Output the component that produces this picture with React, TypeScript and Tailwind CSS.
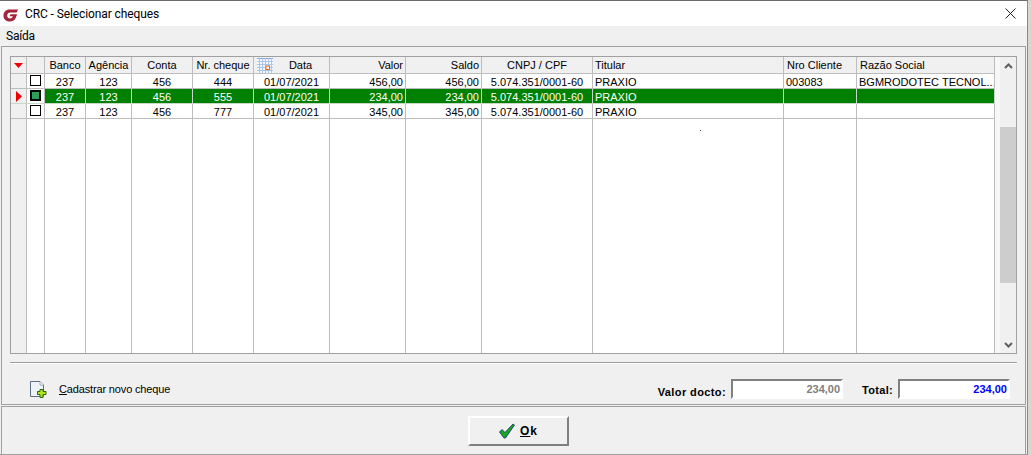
const cols = "grid grid-cols-[16px_18px_41px_46px_61px_61px_76px_76px_76px_111px_191px_73px_138px]";

const rows = [
  { nr: "444", valor: "456,00", saldo: "456,00", cliente: "003083", razao: "BGMRODOTEC TECNOL..." },
  { nr: "555", valor: "234,00", saldo: "234,00", cliente: "", razao: "", selected: true },
  { nr: "777", valor: "345,00", saldo: "345,00", cliente: "", razao: "" },
];

const Logo = () => (
  <svg className="mt-[3px]" width="16" height="13" viewBox="0 0 17 15" preserveAspectRatio="none">
    <path d="M16 0.5 H7 C3 0.5 0.5 3.5 0.5 7.5 C0.5 11.5 3 14.5 7 14.5 C10.5 14.5 12.5 13 13.5 10.5 L15 6 H8 L7 8.5 H10.5 C10 10.3 9 11 7.5 11 C5.5 11 4.5 9.5 4.5 7.5 C4.5 5.5 5.8 4 8 4 H14.5 Z" fill="#a3243b" />
  </svg>
);

const CalendarIcon = () => (
  <svg width="16" height="15" viewBox="0 0 16 15">
    <rect x="0" y="0" width="16" height="15" fill="#f4f7fc" />
    <path d="M0 0.5H16" stroke="#7fa6dc" />
    <path d="M0 3.5H16M0 6.5H16M0 9.5H16M0 12.5H16M2.5 0V15M5.5 0V15M8.5 0V15M11.5 0V15M14.5 0V15" stroke="#a8c6ec" />
    <rect x="9" y="8" width="3.5" height="3.5" fill="#fff" stroke="#e8651a" />
  </svg>
);

const NewFileIcon = () => (
  <svg width="17" height="17" viewBox="0 0 17 17">
    <path d="M0.5 0.5 H10 L13.5 4 V15.5 H0.5 Z" fill="#eef3fa" stroke="#5f6f85" />
    <path d="M10 0.5 V4 H13.5" fill="#fff" stroke="#9aa7b8" />
    <path d="M10 8.5 H13 V10.5 H16 V13.5 H13 V16.5 H10 V13.5 H7.5 V10.5 H10 Z" fill="#b5e61d" stroke="#2b6a0a" />
  </svg>
);

const CheckIcon = () => (
  <svg width="16" height="16" viewBox="0 0 16 16">
    <path d="M0.5 9 L3 6.5 L6 9.5 L14 1 L15.5 2 L6.5 15 L5 15 Z" fill="#19a81c" stroke="#0a2a7a" strokeWidth="0.8" />
  </svg>
);

const Chevron = ({ up }: { up?: boolean }) => (
  <svg width="9" height="6" viewBox="0 0 9 6">
    <path d={up ? "M1 5 L4.5 1.5 L8 5" : "M1 1 L4.5 4.5 L8 1"} fill="none" stroke="#606060" strokeWidth="2" />
  </svg>
);

const HeadCell = ({ className = "", children }: { className?: string; children?: React.ReactNode }) => (
  <div className={`flex items-center border-r border-[#bdbdbd] ${className}`}>{children}</div>
);

const Cell = ({ selected, className = "", children }: { selected?: boolean; className?: string; children?: React.ReactNode }) => (
  <div
    data-selected={selected}
    className={`flex items-center pt-[2px] border-r border-[#bdbdbd] whitespace-nowrap overflow-hidden data-[selected=true]:border-[#c8d8c8] ${className}`}
  >
    {children}
  </div>
);

export default function App() {
  return (
    <div className="flex w-[1031px] h-[455px] overflow-hidden bg-[#d9d7c9] text-[11px] text-black font-['Liberation_Sans',sans-serif]">
      <div className="flex flex-col w-[1028px] h-full bg-[#f0f0f0] border-t border-r border-b border-t-[#6b6b6b] border-r-[#8a8a8a] border-b-[#a0a0a0]">
        {/* title bar */}
        <div className="flex items-center h-[25px] shrink-0 bg-white pl-[3px] pr-[11px]">
          <Logo />
          <span className="ml-[6px] text-[12px] tracking-[-0.1px] font-['Roboto',sans-serif]">CRC - Selecionar cheques</span>
          <svg className="ml-auto" width="11" height="11" viewBox="0 0 11 11">
            <path d="M0.5 0.5 L10.5 10.5 M10.5 0.5 L0.5 10.5" stroke="#222" strokeWidth="1" />
          </svg>
        </div>
        {/* menu */}
        <div className="flex items-center h-5 shrink-0 pl-[6px] text-[12px] tracking-[-0.2px] font-['Roboto',sans-serif]">Saída</div>

        {/* main panel */}
        <div className="flex flex-col h-[359px] shrink-0 ml-px mr-px border border-[#a0a0a0] pl-2 pr-2 pt-[9px]">
          {/* grid */}
          <div className="flex h-[298px] shrink-0 bg-white border border-[#a0a0a0]">
            <div className="flex flex-col w-[984px] shrink-0">
              <div className={`${cols} h-[17px] shrink-0 bg-[#f0f0f0] border-b border-[#bdbdbd]`}>
                <HeadCell className="justify-center">
                  <svg width="9" height="5" viewBox="0 0 9 5"><path d="M0 0 H9 L4.5 5 Z" fill="#ee0000" /></svg>
                </HeadCell>
                <HeadCell />
                <HeadCell className="justify-center">Banco</HeadCell>
                <HeadCell className="justify-center">Agência</HeadCell>
                <HeadCell className="justify-center">Conta</HeadCell>
                <HeadCell className="justify-center">Nr. cheque</HeadCell>
                <HeadCell className="relative justify-center pl-[18px]">
                  <span className="absolute left-[3px] top-px"><CalendarIcon /></span>
                  Data
                </HeadCell>
                <HeadCell className="justify-end pr-[2px]">Valor</HeadCell>
                <HeadCell className="justify-end pr-[2px]">Saldo</HeadCell>
                <HeadCell className="justify-center">CNPJ / CPF</HeadCell>
                <HeadCell className="pl-[2px]">Titular</HeadCell>
                <HeadCell className="pl-[3px]">Nro Cliente</HeadCell>
                <HeadCell className="pl-[3px]">Razão Social</HeadCell>
              </div>

              {rows.map(row => {
                const selected = row.selected;
                return (
                  <div
                    key={row.nr}
                    data-selected={selected}
                    className={`${cols} h-[15px] shrink-0 bg-white border-b border-[#bdbdbd] data-[selected=true]:bg-[#008000] data-[selected=true]:text-white data-[selected=true]:border-[#c8d8c8]`}
                  >
                    <div className="flex items-center justify-center bg-[#f0f0f0] border-r border-[#bdbdbd]">
                      {selected && (
                        <svg width="6" height="11" viewBox="0 0 6 11"><path d="M0 0 L6 5.5 L0 11 Z" fill="#ee0000" /></svg>
                      )}
                    </div>
                    <div className="relative bg-white border-r border-[#bdbdbd]">
                      <span
                        data-selected={selected}
                        className="absolute left-[3px] top-[1px] size-[11px] bg-white border border-black data-[selected=true]:bg-[#2ca05a] data-[selected=true]:border-2"
                      ></span>
                    </div>
                    <Cell selected={selected} className="justify-center">237</Cell>
                    <Cell selected={selected} className="justify-center">123</Cell>
                    <Cell selected={selected} className="justify-center">456</Cell>
                    <Cell selected={selected} className="justify-center">{row.nr}</Cell>
                    <Cell selected={selected} className="justify-center">01/07/2021</Cell>
                    <Cell selected={selected} className="justify-end pr-[2px]">{row.valor}</Cell>
                    <Cell selected={selected} className="justify-end pr-[2px]">{row.saldo}</Cell>
                    <Cell selected={selected} className="justify-center">5.074.351/0001-60</Cell>
                    <Cell selected={selected} className="pl-[2px]">PRAXIO</Cell>
                    <Cell selected={selected} className="pl-[2px]">{row.cliente}</Cell>
                    <Cell selected={selected} className="pl-[2px]">{row.razao}</Cell>
                  </div>
                );
              })}

              {/* empty area, column lines keep going */}
              <div className={`${cols} flex-1`}>
                <div className="bg-[#f0f0f0] border-r border-[#bdbdbd]"></div>
                <div className="border-r border-[#bdbdbd]"></div>
                <div className="border-r border-[#bdbdbd]"></div>
                <div className="border-r border-[#bdbdbd]"></div>
                <div className="border-r border-[#bdbdbd]"></div>
                <div className="border-r border-[#bdbdbd]"></div>
                <div className="border-r border-[#bdbdbd]"></div>
                <div className="border-r border-[#bdbdbd]"></div>
                <div className="border-r border-[#bdbdbd]"></div>
                <div className="border-r border-[#bdbdbd]"></div>
                <div className="relative border-r border-[#bdbdbd]">
                  <span className="absolute left-[107px] top-[11px] size-px bg-[#555]"></span>
                </div>
                <div className="border-r border-[#bdbdbd]"></div>
                <div className="border-r border-[#bdbdbd]"></div>
              </div>
            </div>

            {/* scrollbar */}
            <div className="w-[5px] shrink-0 bg-[#f7f7f7]"></div>
            <div className="flex flex-col w-[16px] shrink-0 bg-[#f0f0f0]">
              <div className="flex items-center justify-center h-[17px] shrink-0"><Chevron up /></div>
              <div className="flex-1 pt-[53px] pb-[53px]">
                <div className="h-full bg-[#cdcdcd]"></div>
              </div>
              <div className="flex items-center justify-center h-[17px] shrink-0"><Chevron /></div>
            </div>
          </div>

          {/* divider */}
          <div className="h-[2px] shrink-0 mt-2 bg-[#a0a0a0] border-b border-white"></div>

          {/* totals */}
          <div className="flex flex-1 items-center pl-5 pr-[7px] pt-[10px]">
            <NewFileIcon />
            <span className="ml-[12px] tracking-[-0.15px]"><span className="underline">C</span>adastrar novo cheque</span>
            <span className="ml-auto mt-[7px] font-bold tracking-[0.4px]">Valor docto:</span>
            <div className="flex items-center justify-end ml-[5px] w-[112px] h-[20px] bg-white border-2 border-t-[#808080] border-l-[#808080] border-r-white border-b-white pr-[1px] font-bold text-[#7f7f7f]">234,00</div>
            <span className="ml-[19px] mt-[3px] font-bold tracking-[0.3px]">Total:</span>
            <div className="flex items-center justify-end ml-[5px] w-[112px] h-[20px] bg-white border-2 border-t-[#808080] border-l-[#808080] border-r-white border-b-white pr-[1px] font-bold text-[#0000ff]">234,00</div>
          </div>
        </div>

        {/* bottom panel */}
        <div className="flex flex-1 items-center justify-center ml-px mr-px mt-px border-l border-t border-r border-[#a0a0a0]">
          <button className="flex items-center justify-center gap-[5px] w-[101px] h-[30px] ml-[10px] bg-[#f0f0f0] border-2 border-t-white border-l-white border-r-[#808080] border-b-[#808080] font-bold text-[12px]">
            <CheckIcon />
            <span className="tracking-[1px]"><span className="underline">O</span>k</span>
          </button>
        </div>
      </div>
    </div>
  );
}
